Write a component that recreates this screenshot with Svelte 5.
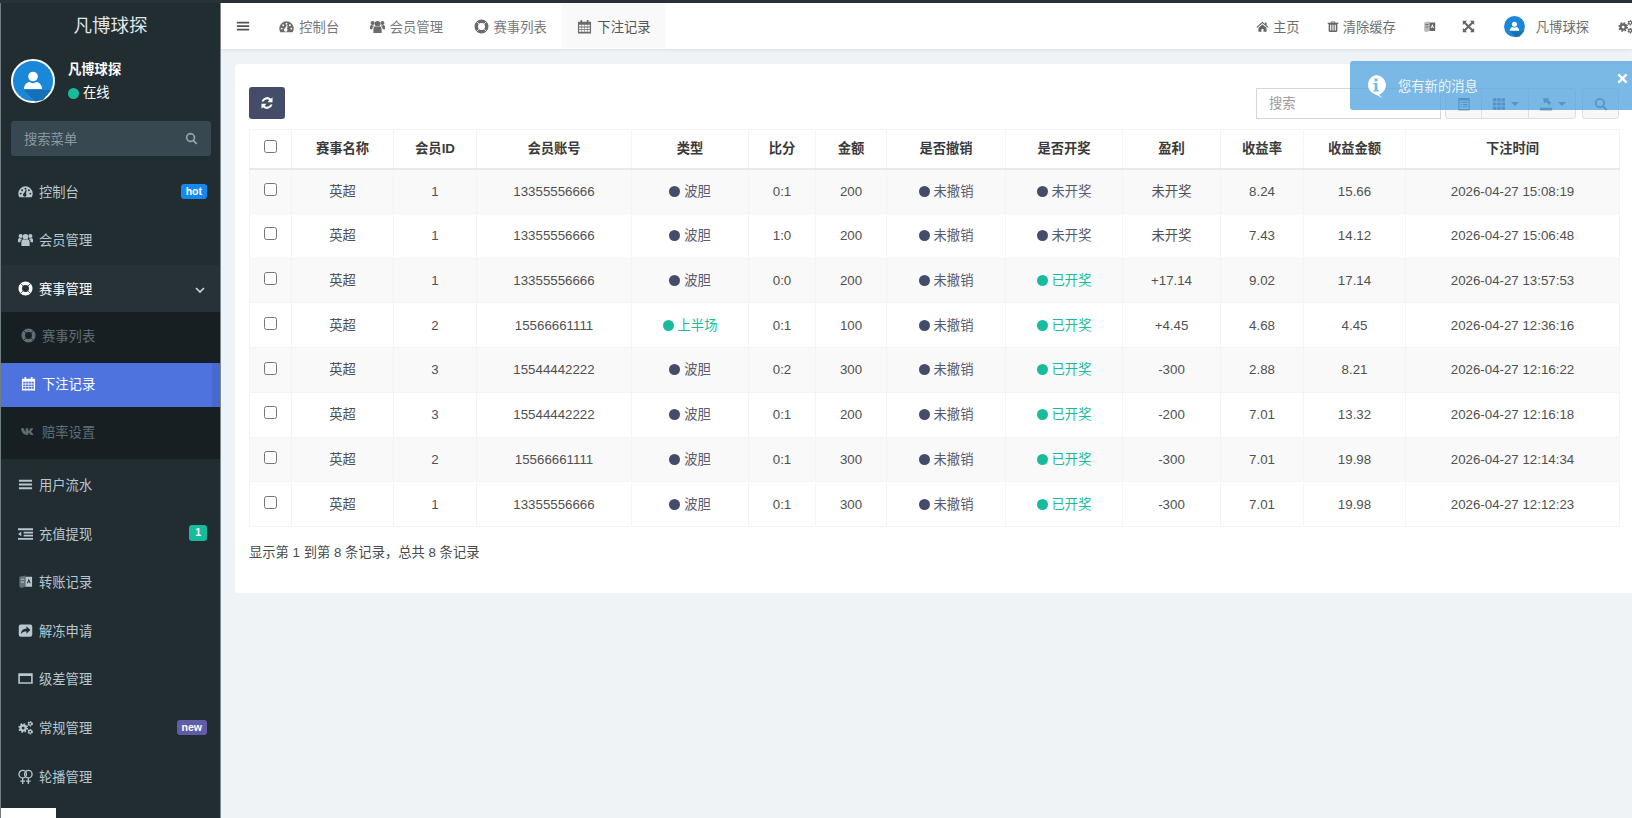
<script>
  const circ = (x, y, r) => `M${x - r} ${y}a${r} ${r} 0 1 0 ${2 * r} 0a${r} ${r} 0 1 0 ${-2 * r} 0z`;
  let calHoles = '';
  for (const y of [6.2, 9, 11.8]) for (const x of [2.2, 5.2, 8.2, 11.2]) calHoles += `M${x} ${y}h2.5v1.9h-2.5z`;
  let thHoles = '';
  for (const y of [1.5, 6.2, 10.9]) for (const x of [1, 5.9, 10.8]) thHoles += `M${x} ${y}h4.1v3.6h-4.1z`;
  const gear = (x, y, r, sw, n) => {
    const c = 2 * Math.PI * (r + sw * 0.3);
    return `<circle cx="${x}" cy="${y}" r="${r}" fill="none" stroke="currentColor" stroke-width="${sw}"/><circle cx="${x}" cy="${y}" r="${r + sw * 0.3}" fill="none" stroke="currentColor" stroke-width="${sw * 1.4}" stroke-dasharray="${c / n / 2} ${c / n / 2}"/>`;
  };
  const ICONS = {
    dashboard: `<path fill-rule="evenodd" d="M8 2.5A7.7 7.7 0 0 0 .3 10.2c0 1.3.3 2.5 1 3.6a.6.6 0 0 0 .5.3h12.4a.6.6 0 0 0 .5-.3c.7-1.1 1-2.3 1-3.6A7.7 7.7 0 0 0 8 2.5z${circ(2.9, 10.2, 1)}${circ(4.4, 6.6, 1)}${circ(8, 5.1, 1)}${circ(13.1, 10.2, 1)}${circ(11.6, 6.6, 1)}M6.3 9.9l2.1-3.6.9.3-.8 3.6a1.9 1.9 0 1 1-2.2-.3z"/>`,
    users: `<circle cx="8" cy="5" r="3"/><circle cx="2.800" cy="4.300" r="2.200"/><circle cx="13.200" cy="4.300" r="2.200"/><path d="M3.600 15v-4.200C3.600 9 4.800 7.800 6 7.800c.6.500 1.200.7 2 .7s1.400-.2 2-.7c1.200 0 2.400 1.200 2.400 3V15zM0 11V8.500C0 7.300.7 6.300 1.700 6.300c.5.400 1 .6 1.600.6.300 0 .600 0 .900-.1-.200.500-.300.900-.300 1.200-1 .500-1.300 1.500-1.400 3zM16 11V8.500c0-1.200-.7-2.200-1.700-2.200-.5.400-1 .6-1.600.6-.300 0-.600 0-.900-.1.200.500.300.900.300 1.200 1 .500 1.300 1.500 1.400 3z"/>`,
    ring: `<path fill-rule="evenodd" d="${circ(8, 8, 7.5)}${circ(8, 8, 3.700)}"/><g stroke="var(--ring-gap, #222d32)" stroke-width=".8"><path d="M2.600 2.600l2.700 2.700M13.400 2.600l-2.700 2.700M2.600 13.400l2.700-2.700M13.400 13.400l-2.700-2.700"/></g>`,
    calendar: `<path fill-rule="evenodd" d="M1 3h14v12.500H1z${calHoles}"/><path d="M3.700 1h1.800v3.500H3.700zM10.500 1h1.800v3.500h-1.800z"/>`,
    vk: `<path d="M0 4.500h3c.2 1.800 1.200 3.600 2 3.900V4.500h2.800v2.900c.9-.2 1.900-1.500 2.300-2.900h2.700c-.3 1.700-1.500 3.100-2.300 3.700.9.500 2.200 1.700 2.800 3.400h-3c-.4-1.200-1.500-2.300-2.500-2.400v2.400H7C3 11.600.4 9 0 4.500z"/>`,
    bars: `<path d="M1 3h14v2H1zM1 7h14v2H1zM1 11h14v2H1z"/>`,
    indent: `<path d="M0 2.500h16v1.900H0zM6 6.200h10v1.700H6zM6 9.400h10v1.700H6zM0 12.700h16v1.900H0zM0 8.500l3.500-2.300v4.600z"/>`,
    book: `<path d="M1.500 3 8 1.500v12L3.500 15 1.500 13.500z" opacity=".45"/><path fill-rule="evenodd" d="M8 3h7v10.500H8zM11.500 4.800l-2 5h1.100l.3-.9h1.200l.3.900h1.100zM11.200 8l.3-1 .3 1z"/><path d="M3 5h3.500v1.200H3zM3 8h3.500v1.200H3z" opacity=".9"/>`,
    share: `<path fill-rule="evenodd" d="M3 1.500h10A2.200 2.200 0 0 1 15.200 3.700v8.800A2.200 2.200 0 0 1 13 14.700H3A2.200 2.200 0 0 1 .8 12.500V3.700A2.200 2.200 0 0 1 3 1.500zM9 3.500V6C5.500 6 3.300 7.500 3.300 11.800 4.800 9.600 6.500 9 9 9v2.500l4.200-4z"/>`,
    win: `<path fill-rule="evenodd" d="M.3 2.300h15.400v11.400H.3zM2 5.200V12h12V5.200z"/>`,
    cogs: gear(5.500, 8.500, 2.800, 2.400, 8) + gear(13, 4, 1.600, 1.300, 6) + gear(13, 12.500, 1.600, 1.300, 6),
    venus: `<g fill="none" stroke="currentColor" stroke-width="1.400"><circle cx="5" cy="5.500" r="4"/><circle cx="11" cy="5.500" r="4"/><path d="M5 9.500V16M2.500 13h5M11 9.500V16M8.500 13h5"/></g>`,
    refresh: `<path d="M14.300 1.300v5.800H8.500l2.200-2.200A4 4 0 0 0 4.200 6.300H1.700a6.500 6.500 0 0 1 10.800-3.200zM1.700 14.700V8.900h5.800l-2.200 2.200a4 4 0 0 0 6.500-1.400h2.500a6.500 6.500 0 0 1-10.800 3.200z"/>`,
    search: `<path fill-rule="evenodd" d="M6.800 1a5.800 5.800 0 0 1 4.700 9.200l3.700 3.700-1.500 1.500-3.700-3.700A5.800 5.800 0 1 1 6.800 1zm0 2a3.800 3.800 0 1 0 0 7.600 3.800 3.800 0 0 0 0-7.600z"/>`,
    home: `<path d="M8 2.300.5 8.500l.9 1L8 4.100l6.600 5.400.9-1-2.500-2V3h-2v2zM3 9.600v4.900h3.800v-3.300h2.400v3.300H13V9.600L8 5.500z"/>`,
    trash: `<path fill-rule="evenodd" d="M5.500 1.300h5l.8 1.700H15v1.500h-1.200v9.200c0 .9-.6 1.600-1.300 1.600h-9c-.7 0-1.300-.7-1.300-1.600V4.500H1V3h3.700zM4.200 5.500v7.900h1.500V5.500zM7.200 5.500v7.900h1.600V5.500zM10.300 5.500v7.900h1.500V5.500zM6 3h4l-.3-.6H6.300z"/>`,
    expand: `<path d="M1 1h5.200L4.500 2.700 8 6.200l3.500-3.500L9.800 1H15v5.200l-1.700-1.700L9.800 8l3.500 3.500 1.700-1.700V15H9.800l1.700-1.700L8 9.800l-3.500 3.500L6.200 15H1V9.800l1.700 1.700L6.200 8 2.700 4.500 1 6.200z"/>`,
    listalt: `<path fill-rule="evenodd" d="M1.500 1h13v14h-13zM2.800 4v9.700h10.400V4zM4 5.500h1.500v1.300H4zM6.500 5.500H12v1.300H6.500zM4 8h1.500v1.300H4zM6.500 8H12v1.300H6.500zM4 10.500h1.500v1.300H4zM6.500 10.500H12v1.300H6.500z"/>`,
    th: `<path d="${thHoles}"/>`,
    exportic: `<path d="M1 12.300h14V15H1zM4.500 1.500h7.500L10.300 3.200l3.700 3.300-2.500 2.700-3.600-3.500L6 7.500z"/>`,
    times: `<path d="M3.200 .8 8 5.600 12.800.8l2.400 2.400L10.400 8l4.800 4.800-2.400 2.400L8 10.400l-4.800 4.800-2.400-2.400L5.600 8 .8 3.200z"/>`
  };

  const menu = [
    { icon: 'dashboard', label: '控制台', badge: 'hot', badgeClass: 'b-hot' },
    { icon: 'users', label: '会员管理' },
    { icon: 'ring', label: '赛事管理', open: true, children: [
      { icon: 'ring', label: '赛事列表' },
      { icon: 'calendar', label: '下注记录', active: true },
      { icon: 'vk', label: '赔率设置' }
    ] },
    { icon: 'bars', label: '用户流水' },
    { icon: 'indent', label: '充值提现', badge: '1', badgeClass: 'b-one' },
    { icon: 'book', label: '转账记录' },
    { icon: 'share', label: '解冻申请' },
    { icon: 'win', label: '级差管理' },
    { icon: 'cogs', label: '常规管理', badge: 'new', badgeClass: 'b-new' },
    { icon: 'venus', label: '轮播管理' }
  ];

  const tabs = [
    { icon: 'dashboard', label: '控制台' },
    { icon: 'users', label: '会员管理' },
    { icon: 'ring', label: '赛事列表' },
    { icon: 'calendar', label: '下注记录', active: true }
  ];

  const widths = [42, 102, 83, 155, 117, 67, 71, 119, 117, 98, 83, 102, 214];
  const heads = ['赛事名称', '会员ID', '会员账号', '类型', '比分', '金额', '是否撤销', '是否开奖', '盈利', '收益率', '收益金额', '下注时间'];
  const A = '13355556666', B = '15566661111', C = '15544442222';
  const rows = [
    [1, A, 0, '0:1', 200, 0, '未开奖', '8.24', '15.66', '15:08:19'],
    [1, A, 0, '1:0', 200, 0, '未开奖', '7.43', '14.12', '15:06:48'],
    [1, A, 0, '0:0', 200, 1, '+17.14', '9.02', '17.14', '13:57:53'],
    [2, B, 1, '0:1', 100, 1, '+4.45', '4.68', '4.45', '12:36:16'],
    [3, C, 0, '0:2', 300, 1, '-300', '2.88', '8.21', '12:16:22'],
    [3, C, 0, '0:1', 200, 1, '-200', '7.01', '13.32', '12:16:18'],
    [2, B, 0, '0:1', 300, 1, '-300', '7.01', '19.98', '12:14:34'],
    [1, A, 0, '0:1', 300, 1, '-300', '7.01', '19.98', '12:12:23']
  ];
</script>

{#snippet ic(name, cls = '')}
  <svg class="ic {cls}" viewBox="0 0 16 16" fill="currentColor" aria-hidden="true">{@html ICONS[name]}</svg>
{/snippet}

{#snippet avatar(cls)}
  <svg class={cls} viewBox="0 0 44 44" aria-hidden="true">
    <circle cx="22" cy="22" r="21" fill="#1a87d9" stroke="#fff" stroke-width="2" />
    <path d="M13 31h18l9 0-8 10-8 1.500z" fill="#1670b6" />
    <circle cx="22" cy="17.500" r="4.800" fill="#fff" />
    <path d="M13 30c0-4.500 3.500-7 5.500-7 2 1.500 5 1.500 7 0 2 0 5.500 2.500 5.500 7z" fill="#fff" />
  </svg>
{/snippet}

<div class="page">
  <div class="strip"></div>
  <div class="main">
    <aside class="sidebar">
      <div class="logo">凡博球探</div>
      <div class="user">
        {@render avatar('user-av')}
        <div class="user-info">
          <div class="user-name">凡博球探</div>
          <div class="user-status"><span class="dot green"></span>在线</div>
        </div>
      </div>
      <div class="side-search">
        <span>搜索菜单</span>
        {@render ic('search', 'ss-ic')}
      </div>
      <ul class="menu">
        {#each menu as m}
          <li class="item" class:open={m.open}>
            {@render ic(m.icon, 'm-ic')}
            <span class="m-label">{m.label}</span>
            {#if m.badge}<span class="badge {m.badgeClass}">{m.badge}</span>{/if}
            {#if m.open}
              <svg class="chev" viewBox="0 0 10 6" aria-hidden="true"><path d="M1 1l4 4 4-4" fill="none" stroke="currentColor" stroke-width="1.600" /></svg>
            {/if}
          </li>
          {#if m.children}
            <ul class="sub">
              {#each m.children as c}
                <li class="sub-item" class:active={c.active}>
                  {@render ic(c.icon, 'm-ic')}
                  <span>{c.label}</span>
                </li>
              {/each}
            </ul>
          {/if}
        {/each}
      </ul>
      <div class="corner"></div>
    </aside>

    <div class="right">
      <header class="topbar">
        <div class="nav-item burger">{@render ic('bars', 'burger-ic')}</div>
        {#each tabs as t}
          <div class="nav-item tab" class:active={t.active}>{@render ic(t.icon, 'n-ic')}<span>{t.label}</span></div>
        {/each}
        <div class="nav-right">
          <div class="r-item home">{@render ic('home', 'r-ic')}<span>主页</span></div>
          <div class="r-item clear">{@render ic('trash', 'r-ic')}<span>清除缓存</span></div>
          <div class="r-item lang">{@render ic('book', 'r-ic')}</div>
          <div class="r-item full">{@render ic('expand', 'r-ic')}</div>
          <div class="r-item me">{@render avatar('nav-av')}<span>凡博球探</span></div>
          <div class="r-item cog">{@render ic('cogs', 'r-ic')}</div>
        </div>
      </header>

      <div class="content">
        <section class="panel">
          <div class="toolbar">
            <button class="refresh" type="button" aria-label="刷新">{@render ic('refresh', 'ref-ic')}</button>
            <div class="tools">
              <input class="search-box" placeholder="搜索" />
              <div class="btn-group">
                <span class="tbtn w1">{@render ic('listalt', 't-ic')}</span>
                <span class="tbtn w2">{@render ic('th', 't-ic')}<i class="caret"></i></span>
                <span class="tbtn w2">{@render ic('exportic', 't-ic')}<i class="caret"></i></span>
              </div>
              <span class="tbtn solo">{@render ic('search', 't-ic')}</span>
            </div>
          </div>

          <table>
            <colgroup>
              {#each widths as w}<col style="width:{w}px" />{/each}
            </colgroup>
            <thead>
              <tr>
                <th><input type="checkbox" /></th>
                {#each heads as h}<th>{h}</th>{/each}
              </tr>
            </thead>
            <tbody>
              {#each rows as r}
                <tr>
                  <td><input type="checkbox" /></td>
                  <td>英超</td>
                  <td>{r[0]}</td>
                  <td>{r[1]}</td>
                  <td>
                    {#if r[2]}<span class="st on"><span class="dot green"></span>上半场</span>
                    {:else}<span class="st off"><span class="dot navy"></span>波胆</span>{/if}
                  </td>
                  <td>{r[3]}</td>
                  <td>{r[4]}</td>
                  <td><span class="st off"><span class="dot navy"></span>未撤销</span></td>
                  <td>
                    {#if r[5]}<span class="st on"><span class="dot green"></span>已开奖</span>
                    {:else}<span class="st off"><span class="dot navy"></span>未开奖</span>{/if}
                  </td>
                  <td>{r[6]}</td>
                  <td>{r[7]}</td>
                  <td>{r[8]}</td>
                  <td>2026-04-27 {r[9]}</td>
                </tr>
              {/each}
            </tbody>
          </table>

          <div class="summary">显示第 1 到第 8 条记录，总共 8 条记录</div>
        </section>
      </div>
    </div>
  </div>

  <div class="toast">
    <svg class="toast-ic" viewBox="0 0 22 24" aria-hidden="true">
      <path fill-rule="evenodd" fill="#fff" d="M11 1a10 10 0 0 1 3 19.500l3.500 3.500-7-3.500A10 10 0 0 1 11 1zM9.500 4.500h3v3h-3zM8.500 9h4v7h1.200v1.500H8.400V16h1.300v-5.500H8.500z" />
    </svg>
    <span class="toast-text">您有新的消息</span>
    {@render ic('times', 'toast-x')}
  </div>
</div>

<style>
  :global(html), :global(body) { margin: 0; height: 100%; overflow: hidden; }
  :global(body) { background: #f0f3f6; }
  * { box-sizing: border-box; }
  .page {
    width: 1632px; height: 818px; position: relative; overflow: hidden;
    font-family: "Liberation Sans", "Noto Sans CJK SC", sans-serif;
    font-size: 13.300px; color: #444;
  }
  .strip { height: 3px; background: #2a3138; }
  .main { display: flex; height: 815px; }
  .ic { display: block; flex: none; }

  .sidebar {
    width: 221px; flex: none; background: #222d32; position: relative;
    border-left: 1px solid #6f7d84; border-right: 1px solid #7d8a90; overflow: hidden;
  }
  .logo { height: 47px; line-height: 46px; text-align: center; font-size: 18.500px; color: #dfe5e8; }
  .user { display: flex; height: 71px; padding: 9px 0 0 10px; }
  .user-av { width: 44px; height: 44px; display: block; }
  .user-info { margin-left: 13px; padding-top: 1px; }
  .user-name { color: #fff; font-weight: bold; line-height: 20px; }
  .user-status { color: #fff; line-height: 20px; margin-top: 3px; display: flex; align-items: center; }
  .user-status .dot { margin-right: 4px; }
  .side-search {
    margin: 0 9px 0 10px; height: 35px; background: #374850; border-radius: 3px;
    display: flex; align-items: center; justify-content: space-between;
    padding: 0 13px; color: #8d9ba2;
  }
  :global(.ss-ic) { width: 13px; height: 13px; color: #9aa7ad; }
  .menu { list-style: none; margin: 12px 0 0; padding: 0; }
  .item {
    height: 48.600px; display: flex; align-items: center; padding: 0 13px 2px 17px;
    color: #b8c7ce;
  }
  .item.open { color: #fff; background: #263238; --ring-gap: #263238; }
  :global(.m-ic) { width: 15px; height: 15px; margin-right: 6px; }
  .m-label { flex: 1; }
  .badge {
    height: 15.500px; line-height: 15px; padding: 0 5px; border-radius: 3px;
    font-size: 10.500px; font-weight: bold; color: #fff;
  }
  .b-hot { background: #1688f1; }
  .b-new { background: #605ca8; }
  .b-one { background: #18bc9c; padding: 0 6px; }
  .chev { width: 10px; height: 6px; margin-right: 2px; margin-top: 3px; color: #cfd8dc; }
  .sub {
    list-style: none; margin: -2px 0 2.400px; padding: 3px 0 4px; background: #181f23;
    display: flex; flex-direction: column; gap: 4px; position: relative; --ring-gap: #181f23;
  }
  .sub-item {
    height: 44px; display: flex; align-items: center; padding: 0 0 2px 20px; color: #5c6f78;
  }
  .sub-item.active {
    color: #fff; background: linear-gradient(to right, #4e73df 211px, #4a69cf 211px);
    --ring-gap: #4e73df;
  }

  .corner { position: absolute; left: -1px; bottom: 0; width: 56px; height: 10px; background: #fff; }

  .right { flex: 1; min-width: 0; display: flex; flex-direction: column; }
  .topbar {
    height: 46px; background: #fff; display: flex; flex: none; align-items: stretch;
    box-shadow: 0 1px 3px rgba(0, 0, 0, .09); position: relative; white-space: nowrap; --ring-gap: #fff;
  }
  .nav-item { display: flex; align-items: center; color: #77797c; }
  .burger { padding: 0 15px; width: 43px; }
  :global(.burger-ic) { width: 14px; height: 14px; color: #555; }
  .tab { padding: 0 15.300px; }
  .tab.active { background: #f9f9f9; color: #555; --ring-gap: #f9f9f9; }
  :global(.n-ic) { width: 15px; height: 15px; margin-right: 5px; color: #6b6b6b; }
  .nav-right { margin-left: auto; margin-right: -1px; display: flex; align-items: stretch; }
  .r-item { display: flex; align-items: center; color: #6c6f72; }
  :global(.r-ic) { width: 13px; height: 13px; margin-right: 4px; color: #666; }
  .lang :global(.r-ic), .full :global(.r-ic), .cog :global(.r-ic) { margin-right: 0; }
  .clear { margin-left: 27px; }
  .clear :global(.r-ic) { width: 12px; }
  .lang { margin-left: 27px; }
  .full { margin-left: 26px; }
  .me { margin-left: 28px; }
  .cog { margin-left: 29px; }
  .nav-av { width: 23px; height: 23px; display: block; margin-right: 10px; }
  .cog :global(.r-ic) { width: 15px; height: 15px; }

  .content { flex: 1; padding: 15px 0 0 14px; }
  .panel {
    background: #fff; border-radius: 4px 0 0 4px; height: 529px; padding: 23px 13px 0 14px;
  }
  .toolbar { display: flex; justify-content: space-between; height: 42px; }
  .refresh {
    width: 36px; height: 32px; padding: 0; border: 0; border-radius: 3px; background: #444c69; color: #fff;
    display: flex; align-items: center; justify-content: center;
  }
  :global(.ref-ic) { width: 14px; height: 14px; }
  .tools { display: flex; align-items: flex-start; padding-top: 1px; }
  .search-box {
    width: 185px; height: 31px; border: 1px solid #d2d6de; padding: 0 12px; margin-right: 5px;
    font: inherit; color: #555; outline: none; background: #fff;
  }
  .search-box::placeholder { color: #999; }
  .btn-group { display: flex; }
  .tbtn {
    height: 31px; border: 1px solid #dcdee2; background: #f7f7f7; color: #444c69;
    display: flex; align-items: center; justify-content: center; gap: 3px; margin-left: -1px;
  }
  .w1 { width: 37px; border-radius: 3px 0 0 3px; }
  .w2 { width: 48px; }
  .w2:last-child { border-radius: 0 3px 3px 0; }
  .solo { width: 37px; margin-left: 6px; border-radius: 3px; }
  :global(.t-ic) { width: 14px; height: 14px; }
  .caret { width: 0; height: 0; border: 4px solid transparent; border-top-color: #444c69; border-bottom: 0; margin-left: 2px; }

  table {
    table-layout: fixed; border-collapse: collapse; width: 1370px; color: #505050;
    border-bottom: 1px solid #f4f4f4;
  }
  th, td { border: 1px solid #f4f4f4; text-align: center; padding: 0; line-height: 18px; font-weight: normal; }
  th { height: 39px; font-weight: bold; color: #3a3a3a; border-bottom: 2px solid #e7e9ec; }
  td { height: 44.750px; padding-top: 1px; }
  tbody tr:nth-child(odd) { background: #f9f9f9; }
  input[type="checkbox"] { width: 13px; height: 13px; margin: 0 0 5px; vertical-align: middle; }
  .dot { display: inline-block; width: 11px; height: 11px; border-radius: 50%; vertical-align: -1px; margin-right: 4px; }
  .dot.green { background: #18bc9c; }
  .dot.navy { background: #444c69; }
  .st.on { color: #18bc9c; }
  .st.off { color: #555b70; }
  .summary { margin-top: 17px; line-height: 18px; color: #4a4a4a; }

  .toast {
    position: absolute; left: 1350px; top: 61px; width: 282px; height: 49px;
    background: rgba(89, 166, 224, .8); border-radius: 3px 0 0 3px; color: #fff;
    display: flex; align-items: center;
  }
  .toast-ic { width: 22px; height: 24px; margin-left: 15px; margin-right: 11px; }
  .toast-text { margin-top: -1px; color: #eef6fc; }
  :global(.toast-x) { position: absolute; right: 4px; top: 12px; width: 11px; height: 11px; color: #fff; }
</style>
